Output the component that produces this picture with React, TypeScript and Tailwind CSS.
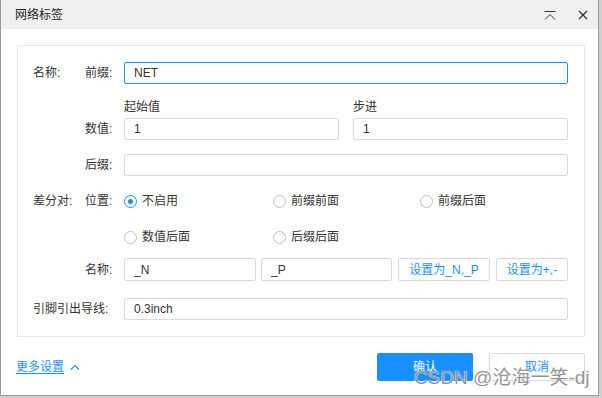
import React from "react";

const FONT = { fontFamily: '"Liberation Sans", "Noto Sans CJK SC", sans-serif' };

function Input({ value, w, focused }: { value: string; w: string; focused?: boolean }) {
  return (
    <div
      className={`${w} h-[22px] shrink-0 flex items-center pl-[9px] text-[12px] text-[#333] bg-white border rounded-[2px] ${
        focused ? "border-[#1890ff]" : "border-[#d9d9d9]"
      }`}
    >
      {value}
    </div>
  );
}

function Radio({ label, checked }: { label: string; checked?: boolean }) {
  return (
    <div className="flex items-center gap-[5px]">
      <div
        className={`w-[13px] h-[13px] rounded-full border flex items-center justify-center bg-white ${
          checked ? "border-[#1890ff]" : "border-[#bfbfbf]"
        }`}
      >
        {checked && <div className="w-[5px] h-[5px] rounded-full bg-[#1890ff]" />}
      </div>
      <span className="text-[12px] text-[#333]">{label}</span>
    </div>
  );
}

function Row({ c1, c2, children, h = "h-[22px]", mt }: { c1?: string; c2?: string; children?: React.ReactNode; h?: string; mt: string }) {
  return (
    <div className={`flex items-center ${h} ${mt}`}>
      <div className="w-[52px] shrink-0 text-[12px] text-[#333]">{c1}</div>
      <div className="w-[39px] shrink-0 text-[12px] text-[#333]">{c2}</div>
      <div className="flex items-center">{children}</div>
    </div>
  );
}

export default function App() {
  return (
    <div className="w-[602px] h-[398px] relative bg-[#cfcfcf] overflow-hidden" style={FONT}>
      <div className="w-[599px] h-[396px] bg-white border-l border-r border-b border-[#9a9a9a] flex flex-col">
        {/* title bar */}
        <div className="h-[29px] bg-[#f0f0f0] flex items-center pl-[14px] pr-[10px] shrink-0">
          <span className="text-[12px] text-[#222]">网络标签</span>
          <div className="ml-auto flex items-center gap-[22px]">
            <svg width="12" height="9" viewBox="0 0 12 9" className="mt-[1px]">
              <line x1="0.5" y1="0.5" x2="11.5" y2="0.5" stroke="#333" strokeWidth="1" />
              <polyline points="1,8.5 6,3.5 11,8.5" fill="none" stroke="#333" strokeWidth="1" />
            </svg>
            <svg width="10" height="10" viewBox="0 0 10 10">
              <line x1="1" y1="1" x2="9" y2="9" stroke="#333" strokeWidth="1.2" />
              <line x1="9" y1="1" x2="1" y2="9" stroke="#333" strokeWidth="1.2" />
            </svg>
          </div>
        </div>

        {/* panel */}
        <div className="mt-[16px] ml-[16px] w-[568px] border border-[#e8e8e8] pl-[15px] pt-[16px] pb-[16px]">
          <Row c1="名称:" c2="前缀:" mt="mt-0">
            <Input value="NET" w="w-[444px]" focused />
          </Row>
          <div className="flex h-[16px] mt-[15px] items-center">
            <div className="w-[91px] shrink-0" />
            <div className="w-[229px] text-[12px] text-[#333]">起始值</div>
            <div className="text-[12px] text-[#333]">步进</div>
          </div>
          <Row c2="数值:" mt="mt-[3px]">
            <div className="flex gap-[14px]">
              <Input value="1" w="w-[215px]" />
              <Input value="1" w="w-[215px]" />
            </div>
          </Row>
          <Row c2="后缀:" mt="mt-[14px]">
            <Input value="" w="w-[444px]" />
          </Row>
          <Row c1="差分对:" c2="位置:" mt="mt-[14px]">
            <div className="w-[149px]"><Radio label="不启用" checked /></div>
            <div className="w-[147px]"><Radio label="前缀前面" /></div>
            <div><Radio label="前缀后面" /></div>
          </Row>
          <Row mt="mt-[14px]">
            <div className="w-[149px]"><Radio label="数值后面" /></div>
            <div><Radio label="后缀后面" /></div>
          </Row>
          <Row c2="名称:" mt="mt-[10px]" h="h-[23px]">
            <div className="flex items-center">
              <div className="w-[132px] h-[23px] flex items-center pl-[9px] text-[12px] text-[#333] border border-[#d9d9d9] rounded-[2px]">_N</div>
              <div className="ml-[5px] w-[131px] h-[23px] flex items-center pl-[9px] text-[12px] text-[#333] border border-[#d9d9d9] rounded-[2px]">_P</div>
              <div className="ml-[6px] w-[92px] h-[23px] flex items-center justify-center text-[12px] text-[#1890ff] border border-[#d9d9d9] rounded-[2px]">设置为_N,_P</div>
              <div className="ml-[6px] w-[72px] h-[23px] flex items-center justify-center text-[12px] text-[#1890ff] border border-[#d9d9d9] rounded-[2px]">设置为+,-</div>
            </div>
          </Row>
          <div className="flex items-center h-[22px] mt-[17px]">
            <div className="w-[91px] shrink-0 text-[12px] text-[#333]">引脚引出导线:</div>
            <Input value="0.3inch" w="w-[444px]" />
          </div>
        </div>

        {/* footer */}
        <div className="mt-[16px] flex items-center pl-[15px] pr-[13px]">
          <div className="flex items-center gap-[6px] text-[#1890ff]">
            <span className="text-[12px] underline underline-offset-2">更多设置</span>
            <svg width="10" height="6" viewBox="0 0 10 6">
              <polyline points="1,5.5 5,1.5 9,5.5" fill="none" stroke="#1890ff" strokeWidth="1.2" />
            </svg>
          </div>
          <div className="ml-auto flex gap-[16px]">
            <div className="w-[96px] h-[28px] bg-[#1890ff] rounded-[2px] flex items-center justify-center text-white text-[12px]">确认</div>
            <div className="w-[96px] h-[28px] border border-[#d9d9d9] rounded-[2px] flex items-center justify-center text-[#1890ff] text-[12px]">取消</div>
          </div>
        </div>
      </div>

      {/* watermark */}
      <div
        className="absolute left-[414px] top-[366px] text-[19px] leading-[24px] text-[rgba(110,110,110,0.75)] whitespace-nowrap"
        style={{ textShadow: "0 0 1px #fff, 0 0 1px #fff" }}
      >
        CSDN @沧海一笑-dj
      </div>
    </div>
  );
}
